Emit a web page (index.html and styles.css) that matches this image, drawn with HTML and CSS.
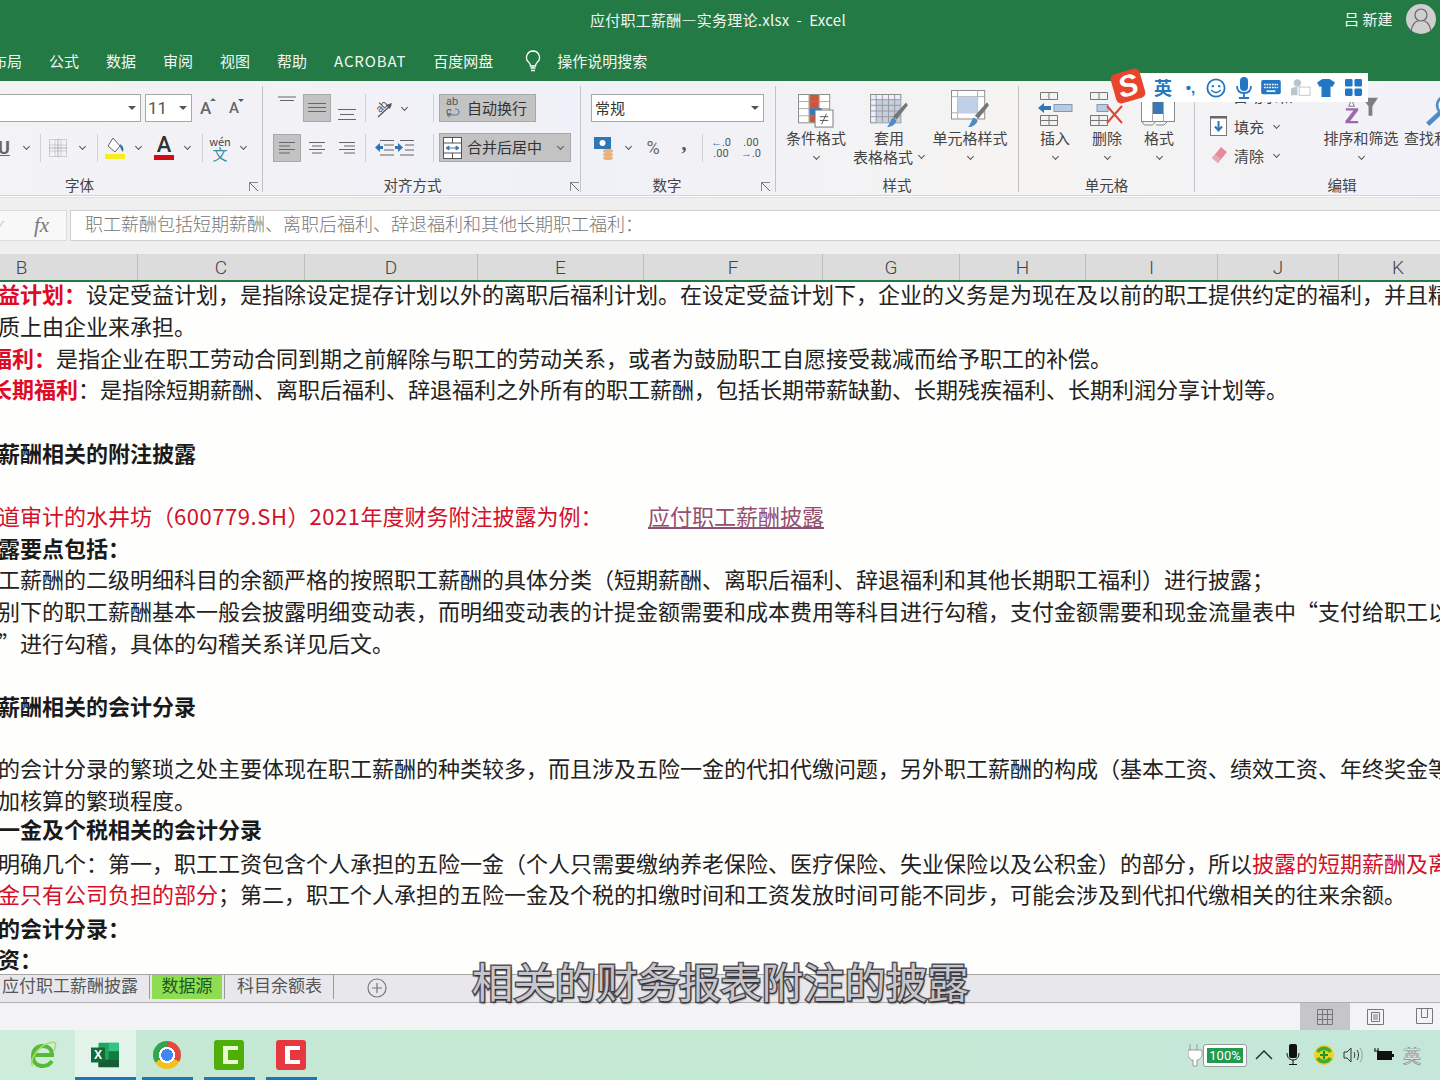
FILE: index.html
```html
<!DOCTYPE html>
<html lang="zh-CN">
<head>
<meta charset="utf-8">
<title>应付职工薪酬—实务理论.xlsx - Excel</title>
<link rel="stylesheet" href="styles.css">
</head>
<body>
<div class="app">
  <header class="titlebar">
    <div class="title">应付职工薪酬—实务理论.xlsx&nbsp; -&nbsp; Excel</div>
    <div class="user">吕 新建</div>
    <svg class="avatar" width="30" height="30" viewBox="0 0 30 30"><circle cx="15" cy="15" r="15" fill="#cfcfcf"/><circle cx="15" cy="11" r="6" fill="none" stroke="#666" stroke-width="1.2"/><path d="M5 27c1-7 5-10 7-10M25 27c-1-7-5-10-7-10" fill="none" stroke="#666" stroke-width="1.2"/></svg>
  </header>
  <nav class="tabs">
    <span>布局</span><span>公式</span><span>数据</span><span>审阅</span><span>视图</span><span>帮助</span><span class="acro">ACROBAT</span><span>百度网盘</span>
    <svg class="bulb" width="16" height="24" viewBox="0 0 16 24"><path d="M8 2a6.500 6.500 0 0 0-4 11.600c1 1 1.500 2 1.500 3.400h5c0-1.400.5-2.400 1.500-3.400A6.500 6.500 0 0 0 8 2z" fill="none" stroke="#fff" stroke-width="1.300"/><path d="M5.500 19h5M6 21.500h4" stroke="#fff" stroke-width="1.500"/></svg>
    <span class="search">操作说明搜索</span>
  </nav>

  <section class="ribbon">
    <div class="group g-font">
      <div class="r1 r-font1">
        <div class="box fontname"><i class="arrow"></i></div>
        <div class="box fontsize"><b>11</b><i class="arrow"></i></div>
        <div class="growa"><span>A</span><i class="tri up"></i></div>
        <div class="growa small"><span>A</span><i class="tri down"></i></div>
      </div>
      <div class="r2 r-font2">
        <span class="u">U</span><i class="chev"></i><i class="vsep"></i>
        <svg width="18" height="18" viewBox="0 0 18 18"><path d="M.5.5h17v17H.5zM6 .5v17M12 .5v17M.5 6h17M.5 12h17" fill="none" stroke="#aaa" stroke-dasharray="1 1"/><path d="M.5 9h17M9 .5v17" stroke="#777" stroke-dasharray="1 1"/></svg>
        <i class="chev"></i><i class="vsep"></i>
        <svg width="20" height="22" viewBox="0 0 20 22"><path d="M8 1l7 8-5 6-7-6z" fill="#fff" stroke="#666"/><path d="M15 7c3 2 4 4 3 8-2-2-3-4-3-8z" fill="#3c6ea8"/><rect y="17" width="20" height="5" fill="#f5ee1e"/></svg>
        <i class="chev"></i>
        <div class="fcolor"><span>A</span><i></i></div>
        <i class="chev"></i><i class="vsep"></i>
        <div class="wen"><span>wén</span><em>文</em></div>
        <i class="chev"></i>
      </div>
      <div class="label l-font">字体</div>
      <i class="launch"></i>
    </div>

    <div class="group g-align">
      <div class="r1 r-align">
        <i></i>
        <div class="alignbtn top"><svg width="18" height="14" viewBox="0 0 18 14"><path d="M0 1h18M2 4.500h14" stroke="#666"/></svg></div><i></i>
        <div class="alignbtn on"><svg width="18" height="14" viewBox="0 0 18 14"><path d="M0 2.500h18M0 6.500h18M0 10.500h18" stroke="#666"/></svg></div><i></i>
        <div class="alignbtn low"><svg width="18" height="14" viewBox="0 0 18 14"><path d="M0 2.500h18M2 7.500h14M0 12.500h18" stroke="#666"/></svg></div>
        <i class="vsep"></i>
        <svg width="20" height="22" viewBox="0 0 20 22"><text x="2" y="13" transform="rotate(-45 8 10)" class="orient">ab</text><path d="M4 20L17 8" stroke="#555" stroke-width="1.300"/><path d="M18 6l-2 6-4-4z" fill="#555"/></svg>
        <i class="chev"></i><i></i><i class="vsep"></i><i></i>
        <div class="flatbtn wrapb">
          <svg width="18" height="22" viewBox="0 0 18 22"><path d="M3 18h9a3 3 0 0 0 0-6H11M3 18l3-2M3 18l3 2" stroke="#5a7aa0" fill="none"/></svg>
          <span class="ab">ab<br>c</span><span>自动换行</span>
        </div>
      </div>
      <div class="r2 r-align">
        <i></i>
        <div class="alignbtn on"><svg width="16" height="14" viewBox="0 0 16 14"><path d="M0 1.500h16M0 5h11M0 8.500h16M0 12h11" stroke="#666"/></svg></div><i></i>
        <div class="alignbtn"><svg width="16" height="14" viewBox="0 0 16 14"><path d="M0 1.500h16M3 5h10M0 8.500h16M3 12h10" stroke="#666"/></svg></div><i></i>
        <div class="alignbtn"><svg width="16" height="14" viewBox="0 0 16 14"><path d="M0 1.500h16M5 5h11M0 8.500h16M5 12h11" stroke="#666"/></svg></div>
        <i class="vsep"></i>
        <svg width="19" height="18" viewBox="0 0 19 18"><path d="M5 1.500h14M9 6h10M9 11h10M5 16h14" stroke="#666"/><path d="M0 8.500L5 4v3h3v3H5v3z" fill="#2d74b8"/></svg>
        <svg width="19" height="18" viewBox="0 0 19 18"><path d="M5 1.500h14M10 6h9M10 11h9M5 16h14" stroke="#666"/><path d="M8 8.500L3 4v3H0v3h3v3z" fill="#2d74b8"/></svg>
        <i></i><i class="vsep"></i><i></i>
        <div class="flatbtn mergeb">
          <svg width="22" height="22" viewBox="0 0 22 22"><rect x=".5" y=".5" width="18" height="21" fill="#fff" stroke="#555"/><path d="M.5 6h18M.5 16h18M9.500.5V6M9.500 16v5.500" stroke="#555"/><path d="M3 11h13M3 11l3-2v4zM16 11l-3-2v4z" stroke="#3d78b5" fill="#3d78b5"/></svg>
          <span>合并后居中</span><i class="chev"></i>
        </div>
      </div>
      <div class="label l-align">对齐方式</div>
      <i class="launch"></i>
    </div>

    <div class="group g-num">
      <div class="r1 r-fmt"><div class="box numfmt"><span>常规</span><i class="arrow"></i></div></div>
      <div class="r2 r-num">
        <svg width="22" height="24" viewBox="0 0 22 24"><rect x="1" y="1" width="17" height="12" fill="#2f76b5"/><circle cx="9.500" cy="7" r="3" fill="#fff"/><ellipse cx="15" cy="15" rx="5" ry="2" fill="#e8b27a"/><ellipse cx="15" cy="18.500" rx="5" ry="2" fill="#e8b27a"/><ellipse cx="15" cy="22" rx="5" ry="2" fill="#e8b27a"/></svg>
        <i class="chev"></i>
        <span class="pct">%</span>
        <span class="comma">,</span>
        <i class="vsep"></i>
        <div class="dec"><span><em>←</em>.0</span><span>.00</span></div>
        <div class="dec"><span>.00</span><span><em>→</em>.0</span></div>
      </div>
      <div class="label l-num">数字</div>
      <i class="launch"></i>
    </div>

    <div class="group g-style">
      <div class="big">
        <svg width="38" height="34" viewBox="0 0 38 36"><rect x=".5" y=".5" width="33" height="30" fill="#fff" stroke="#888"/><path d="M11.500.5v30M22.500.5v30M.5 8h33M.5 15.500h33M.5 23h33" stroke="#aaa"/><rect x="12" y="1" width="10" height="7" fill="#c9573d"/><rect x="12" y="8" width="10" height="7" fill="#c9573d"/><rect x="12" y="15" width="13" height="8" fill="#3d78b5"/><rect x="12" y="23" width="7" height="7" fill="#c9573d"/><rect x="18" y="17" width="19" height="18" fill="#fff" stroke="#777"/><path d="M23 24h9M23 28h9M30 21l-5 11" stroke="#555"/></svg>
        <span>条件格式</span><i class="chev"></i>
      </div>
      <div class="big">
        <svg width="38" height="34" viewBox="0 0 40 36"><rect x=".5" y=".5" width="32" height="30" fill="#eef" stroke="#888"/><rect x="6" y="6" width="26" height="24" fill="#c4cfe0"/><path d="M6.500.5v30M13 .5v30M19.500.5v30M26 .5v30M.5 6h32M.5 12h32M.5 18h32M.5 24h32" stroke="#999"/><path d="M38 9l2 3-12 15-4-3z" fill="#777"/><path d="M24 25l4 3c-1 4-5 7-10 7 3-3 3-7 6-10z" fill="#4d8cc7"/></svg>
        <span>套用</span><span class="line2">表格格式<i class="chev"></i></span>
      </div>
      <div class="big">
        <svg class="up4" width="38" height="38" viewBox="0 0 40 40"><rect x=".5" y=".5" width="35" height="30" fill="#fff" stroke="#888"/><path d="M7 .5v30M28 .5v30M.5 7h35M.5 24h35" stroke="#aaa"/><rect x="7" y="7" width="21" height="17" fill="#c0d0e8"/><path d="M38 13l2 3-11 14-4-3z" fill="#777"/><path d="M24 29l4 3c-1 4-5 7-10 7 3-3 3-7 6-10z" fill="#4d8cc7"/></svg>
        <span>单元格样式</span><i class="chev"></i>
      </div>
      <div class="label">样式</div>
    </div>

    <div class="group g-cells">
      <div class="big">
        <svg class="up3" width="36" height="36" viewBox="0 0 36 36"><path d="M3.500 1.500h17v7h-17zM12 1.500v7M3.500 24.500h17v10h-17zM12 24.500v10M3.500 29.500h17" fill="none" stroke="#777"/><rect x="17" y="13.500" width="18" height="7" fill="#b9cbe0" stroke="#7d9ab8"/><path d="M1 17l6-5v3h7v4H7v3z" fill="#2f76b5"/></svg>
        <span>插入</span><i class="chev"></i>
      </div>
      <div class="big">
        <svg class="up3" width="36" height="36" viewBox="0 0 36 36"><path d="M1.500 1.500h17v7h-17zM10 1.500v7M1.500 24.500h17v10h-17zM10 24.500v10M1.500 29.500h17" fill="none" stroke="#777"/><rect x="8" y="13.500" width="11" height="7" fill="#b9cbe0" stroke="#7d9ab8"/><path d="M18 15l15 17M33 15L18 32" stroke="#d9483a" stroke-width="2"/></svg>
        <span>删除</span><i class="chev"></i>
      </div>
      <div class="big">
        <svg class="up3" width="36" height="36" viewBox="0 0 36 36"><rect x=".5" y="1.500" width="33" height="29" fill="#fff" stroke="#888"/><path d="M11.500 1.500v29M22.500 1.500v29" stroke="#aaa"/><rect x="12" y="8" width="10" height="15" fill="#3d78b5"/><path d="M.5 30l3 4h8l4-4M15 34h8l4-4" fill="none" stroke="#888"/></svg>
        <span>格式</span><i class="chev"></i>
      </div>
      <div class="label">单元格</div>
    </div>

    <div class="group g-edit">
      <div class="edit-cols">
        <div class="edit-list">
          <div class="edit-row sum"><span class="sigma">Σ</span><span>自动求和</span><i class="chev"></i></div>
          <div class="edit-row"><svg width="18" height="20" viewBox="0 0 18 20"><rect x=".5" y=".5" width="16" height="19" fill="#fff" stroke="#777"/><rect x="0" y="0" width="17" height="2.500" fill="#666"/><path d="M8.500 5v9M5 10.500l3.500 4 3.500-4" stroke="#2f76b5" stroke-width="2" fill="none"/></svg><span>填充</span><i class="chev"></i></div>
          <div class="edit-row"><svg width="18" height="18" viewBox="0 0 18 18"><path d="M11 1l6 5-9 11-6-5z" fill="#e58b9d"/><path d="M5 8l6 5-3 4-6-5z" fill="#eba9b6"/></svg><span>清除</span><i class="chev"></i></div>
        </div>
        <div class="big sort">
          <svg width="42" height="34" viewBox="0 0 42 36"><path d="M11 6l-3 7h6z" fill="none" stroke="#777"/><path d="M22 4h17l-6 9v10h-4V13z" fill="#7f7f7f"/><path d="M5 15h13v2.500l-8.500 11h8.500v2.500H4.500v-2.500l8.500-11H5z" fill="#a066b0"/></svg>
          <span>排序和筛选</span><i class="chev"></i>
        </div>
        <div class="big find">
          <svg width="50" height="34" viewBox="0 0 50 36"><circle cx="32" cy="12" r="10" fill="#fff" stroke="#5a8fc0" stroke-width="3"/><path d="M25 20L12 32" stroke="#4d8cc7" stroke-width="5"/></svg>
          <span>查找和选择</span>
        </div>
      </div>
      <div class="label l-edit">编辑</div>
    </div>
  </section>

  <section class="fbar">
    <div class="namecap"><span class="tick">✓</span><em>fx</em></div>
    <div class="finput">职工薪酬包括短期薪酬、离职后福利、辞退福利和其他长期职工福利&#65306;</div>
  </section>

  <section class="cols">
    <span>B</span><span>C</span><span>D</span><span>E</span><span>F</span><span>G</span><span>H</span><span>I</span><span>J</span><span>K</span>
  </section>

  <main class="sheet">
    <p><b class="red">益计划&#65306;</b>设定受益计划&#65292;是指除设定提存计划以外的离职后福利计划。在设定受益计划下&#65292;企业的义务是为现在及以前的职工提供约定的福利&#65292;并且精</p>
    <p>质上由企业来承担。</p>
    <p class="far"><b class="red">福利&#65306;</b>是指企业在职工劳动合同到期之前解除与职工的劳动关系&#65292;或者为鼓励职工自愿接受裁减而给予职工的补偿。</p>
    <p class="far"><b class="red">长期福利</b>&#65306;是指除短期薪酬、离职后福利、辞退福利之外所有的职工薪酬&#65292;包括长期带薪缺勤、长期残疾福利、长期利润分享计划等。</p>
    <p>&nbsp;</p>
    <p><b>薪酬相关的附注披露</b></p>
    <p>&nbsp;</p>
    <p><span class="red lead">道审计的水井坊&#65288;<span class="lat">600779.SH</span>&#65289;<span class="lat">2021</span>年度财务附注披露为例&#65306;</span><a class="link">应付职工薪酬披露</a></p>
    <p><b>露要点包括&#65306;</b></p>
    <p>工薪酬的二级明细科目的余额严格的按照职工薪酬的具体分类&#65288;短期薪酬、离职后福利、辞退福利和其他长期职工福利&#65289;进行披露&#65307;</p>
    <p>别下的职工薪酬基本一般会披露明细变动表&#65292;而明细变动表的计提金额需要和成本费用等科目进行勾稽&#65292;支付金额需要和现金流量表中“支付给职工以</p>
    <p>”进行勾稽&#65292;具体的勾稽关系详见后文。</p>
    <p>&nbsp;</p>
    <p><b>薪酬相关的会计分录</b></p>
    <p>&nbsp;</p>
    <p class="up2">的会计分录的繁琐之处主要体现在职工薪酬的种类较多&#65292;而且涉及五险一金的代扣代缴问题&#65292;另外职工薪酬的构成&#65288;基本工资、绩效工资、年终奖金等</p>
    <p>加核算的繁琐程度。</p>
    <p class="up3"><b>一金及个税相关的会计分录</b></p>
    <p class="down2">明确几个&#65306;第一&#65292;职工工资包含个人承担的五险一金&#65288;个人只需要缴纳养老保险、医疗保险、失业保险以及公积金&#65289;的部分&#65292;所以<span class="red">披露的短期薪酬及离</span></p>
    <p><span class="red">金只有公司负担的部分</span>&#65307;第二&#65292;职工个人承担的五险一金及个税的扣缴时间和工资发放时间可能不同步&#65292;可能会涉及到代扣代缴相关的往来余额。</p>
    <p class="down1"><b>的会计分录&#65306;</b></p>
    <p><b>资&#65306;</b></p>
  </main>

  <section class="sheettabs">
    <span class="st first">应付职工薪酬披露</span><i class="stsep"></i>
    <span class="st active">数据源</span><i class="stsep"></i>
    <span class="st third">科目余额表</span><i class="stsep"></i>
    <svg class="plus" width="20" height="20" viewBox="0 0 20 20"><circle cx="10" cy="10" r="9" fill="none" stroke="#777" stroke-width="1.200"/><path d="M10 5v10M5 10h10" stroke="#777" stroke-width="1.200"/></svg>
  </section>

  <section class="status">
    <div class="view on"><svg width="16" height="16" viewBox="0 0 16 16"><path d="M.5.500h15v15H.500zM5.500.500v15M10.500.500v15M.500 5.500h15M.500 10.500h15" fill="none" stroke="#777"/></svg></div>
    <div class="view"><svg width="17" height="16" viewBox="0 0 17 16"><path d="M.5.500h16v15H.500z" fill="none" stroke="#777"/><path d="M4.500 3.500h8v9h-8zM6 6h5M6 8h5M6 10h5" fill="none" stroke="#777"/></svg></div>
    <div class="view"><svg width="17" height="16" viewBox="0 0 17 16"><path d="M.5.500h16v15H.500zM5.500.500v9h6v-9" fill="none" stroke="#777"/></svg></div>
  </section>

  <footer class="taskbar">
    <div class="tb first"><svg width="28" height="30" viewBox="0 0 28 30"><path d="M5 15h18c0-6-4-9-9-9-6 0-10 4-10 10s4 10 10 10c4 0 7-2 9-5" fill="none" stroke="#58b934" stroke-width="4"/><path d="M4 26C-1 22 9 4 24 2c4 0 3 6 0 10" fill="none" stroke="#a4dc72" stroke-width="1.500"/></svg></div>
    <div class="tb act">
      <svg width="28" height="28" viewBox="0 0 30 30"><rect x="8" y="2" width="22" height="26" rx="1" fill="#21a366"/><rect x="19" y="2" width="11" height="9" fill="#33c481"/><rect x="19" y="11" width="11" height="9" fill="#107c41"/><rect x="8" y="20" width="22" height="8" fill="#185c37"/><rect y="7" width="15" height="16" fill="#0f6b38"/><text x="7.500" y="19.500" text-anchor="middle" class="xl">X</text></svg>
    </div>
    <div class="tb"><i class="chrome"></i></div>
    <div class="tb"><svg width="30" height="30" viewBox="0 0 30 30"><rect width="30" height="30" rx="3" fill="#4fae0a"/><path d="M9 6h15v4h-10v10h10v4H9z" fill="#e8f8d0"/></svg></div>
    <div class="tb"><svg width="30" height="30" viewBox="0 0 30 30"><rect width="30" height="30" rx="3" fill="#e8383f"/><path d="M9 6h15v4h-10v10h10v4H9z" fill="#fff"/></svg></div>
    <div class="tray">
      <svg width="15" height="24" viewBox="0 0 15 24"><path d="M2 1v6M9 1v6M0 7h14v4c0 4-3 6-5 6v6H5v-6c-2 0-5-2-5-6z" fill="#fff" stroke="#999"/></svg>
      <div class="batt"><span>100%</span></div>
      <svg class="caret" width="18" height="10" viewBox="0 0 18 10"><path d="M1 9l8-8 8 8" fill="none" stroke="#222" stroke-width="1.300"/></svg>
      <svg class="mic" width="14" height="22" viewBox="0 0 14 22"><rect x="3" y="0" width="8" height="14" rx="2" fill="#111"/><path d="M1 9c0 5 3 7 6 7s6-2 6-7M7 16v4M3 20.500h8" fill="none" stroke="#111"/></svg>
      <svg class="s360" width="20" height="20" viewBox="0 0 20 20"><circle cx="10" cy="10" r="10" fill="#f0d11e"/><path d="M2 6a9.500 9.500 0 0 1 16 0l-3 2a6 6 0 0 0-10 0zM18 14a9.500 9.500 0 0 1-16 0l3-2a6 6 0 0 0 10 0z" fill="#3eaa3a"/><path d="M10 6v8M6 10h8" stroke="#1a9a2a" stroke-width="2.200"/></svg>
      <svg class="spk" width="20" height="16" viewBox="0 0 20 16"><path d="M1 5h3l4-4v14l-4-4H1z" fill="none" stroke="#333"/><path d="M11 5c1 2 1 4 0 6M14 3c2 3 2 7 0 10" fill="none" stroke="#333"/><path d="M17 1c3 4 3 10 0 14" fill="none" stroke="#999"/></svg>
      <svg class="bat2" width="20" height="14" viewBox="0 0 20 14"><rect x="3" y="3" width="15" height="9" fill="#111"/><rect x="18" y="6" width="2" height="3" fill="#111"/><path d="M1 0v3M4 0v3M0 3h5" stroke="#111"/></svg>
      <span class="ying">英</span>
    </div>
  </footer>

  <div class="subtitle">相关的财务报表附注的披露</div>
  <div class="sogou">
    <div class="s-logo"><span>S</span></div>
    <span class="s-ying">英</span>
    <span class="s-punct">•,</span>
    <svg width="20" height="22" viewBox="0 0 22 22"><circle cx="11" cy="11" r="9.500" fill="none" stroke="#2377c2" stroke-width="2"/><circle cx="7.500" cy="9" r="1.300" fill="#2377c2"/><circle cx="14.500" cy="9" r="1.300" fill="#2377c2"/><path d="M6 13c2 4 8 4 10 0" fill="none" stroke="#2377c2" stroke-width="1.500"/></svg>
    <svg width="16" height="22" viewBox="0 0 16 22"><rect x="4" y="0" width="8" height="14" rx="4" fill="#2377c2"/><path d="M1 9c0 5 3 7 7 7s7-2 7-7M8 16v4M3 21h10" fill="none" stroke="#2377c2" stroke-width="1.800"/></svg>
    <svg width="20" height="16" viewBox="0 0 22 18"><rect width="22" height="16" rx="2" fill="#2377c2"/><path d="M3 5h16M3 8.500h16" stroke="#fff" stroke-width="1.800" stroke-dasharray="2 1"/><path d="M6 12.500h10" stroke="#fff" stroke-width="1.800"/></svg>
    <svg width="20" height="20" viewBox="0 0 22 20"><circle cx="7" cy="4.500" r="4" fill="#b9c4cc"/><path d="M0 18V12c0-2 2-3 7-3v9z" fill="#b9c4cc"/><rect x="9" y="9" width="12" height="9" fill="#fff" stroke="#b9c4cc"/></svg>
    <svg class="s-shirt" width="18" height="18" viewBox="0 0 20 20"><path d="M6 0h8l6 4-3 5-2-1v12H5V8L3 9 0 4z" fill="#2377c2"/></svg>
    <svg width="17" height="17" viewBox="0 0 18 18"><rect width="8" height="8" rx="1.500" fill="#2377c2"/><rect x="10" width="8" height="8" rx="1.500" fill="#2377c2"/><rect y="10" width="8" height="8" rx="1.500" fill="#2377c2"/><rect x="10" y="10" width="8" height="8" rx="1.500" fill="#2377c2"/></svg>
  </div>
</div>
</body>
</html>
```
FILE: styles.css
```css
* { box-sizing: border-box; }
html, body { margin: 0; padding: 0; }
body { font-family: "Noto Sans CJK SC", "Noto Sans", sans-serif; color: #444; overflow: hidden; }
i, em { font-style: normal; }
svg { display: block; flex: none; }
.app { position: relative; width: 1440px; height: 1080px; overflow: hidden; display: flex; flex-direction: column; background: #fff; }

/* title */
.titlebar { height: 40px; flex: none; background: #237a45; color: #f2f7f3; display: flex; align-items: center; font-size: 15px; padding-right: 4px; }
.title { margin-left: 590px; width: 755px; white-space: nowrap; letter-spacing: .25px; margin-top: -1px; }
.user { width: 62px; margin-top: -4px; font-size: 15px; }
.avatar { margin-top: -2px; }
.tabs { height: 41px; flex: none; background: #237a45; color: #f2f7f3; display: flex; align-items: center; gap: 27px; font-size: 15px; margin-left: -8px; white-space: nowrap; }
.tabs .acro { letter-spacing: .85px; }
.tabs .bulb { margin: 0 0 0 5px; }
.tabs .search { margin-left: -11px; }

/* ribbon */
.ribbon { height: 115px; flex: none; background: linear-gradient(90deg, #f3f3f5, #f0f0f8 40%, #f5f4f2 70%, #f1f1f8); display: flex; font-size: 15px; overflow: hidden; padding-top: 5px; border-bottom: 1px solid #d3d3d3; }
.group { position: relative; height: 106px; flex: none; border-right: 1px solid #c4c4c4; padding-top: 8px; }
.g-font { width: 263px; }
.g-align { width: 318px; }
.g-num { width: 195px; }
.g-style { width: 243px; display: grid; grid-template-columns: 80px 66px 96px; grid-template-rows: 85px; }
.g-cells { width: 176px; display: grid; grid-template-columns: 52px 52px 52px; grid-template-rows: 85px; padding-left: 10px; }
.g-edit { width: 260px; border-right: 0; }
.r1, .r2 { display: grid; align-items: center; justify-items: center; }
.r1 { height: 28px; }
.r2 { height: 29px; margin-top: 11px; }
.label { position: absolute; left: 0; right: 0; top: 90px; line-height: 18px; text-align: center; font-size: 14.500px; }
.l-font { right: 103px; }
.l-align { right: 18px; }
.l-num { right: 22px; }
.l-edit { left: 34px; right: 0; }
.launch { position: absolute; right: 4px; top: 96px; width: 9px; height: 9px; border-left: 1px solid #888; border-top: 1px solid #888; background: linear-gradient(45deg, transparent 45%, #666 45%, #666 55%, transparent 55%); }
.g-num .launch { right: 5px; }
.g-align .launch { right: 1px; }
.chev { display: block; width: 5px; height: 5px; border-right: 1px solid #555; border-bottom: 1px solid #555; transform: rotate(45deg); margin-top: -2px; }
.arrow { width: 0; height: 0; border: 4px solid transparent; border-top: 4px solid #555; border-bottom: 0; display: block; flex: none; }
.vsep { display: block; width: 1px; height: 28px; background: #d2d2d4; }
.box { height: 28px; background: #fff; border: 1px solid #a8a8a8; display: flex; align-items: center; justify-content: space-between; }

.r-font1 { grid-template-columns: 151px 47px 30px 30px; margin-left: -10px; justify-items: start; }
.fontname { width: 151px; padding-right: 4px; justify-content: flex-end; border-left: 0; }
.fontsize { width: 47px; margin-left: 4px; padding: 0 4px 0 2px; }
.fontsize b { font-weight: 400; font-family: "Roboto", sans-serif; font-size: 17px; color: #555; }
.growa { position: relative; display: flex; font-size: 17px; color: #666; font-family: "Roboto", sans-serif; font-weight: 500; margin-left: 12px; }
.growa.small { font-size: 15px; margin-left: 11px; }
.tri { width: 0; height: 0; border: 3px solid transparent; display: block; margin: 0 0 0 -1px; }
.tri.up { border-bottom: 3px solid #666; border-top: 0; }
.tri.down { border-top: 3px solid #2f5f96; border-bottom: 0; }
.r-font2 { grid-template-columns: 22px 22px 7px 28px 20px 10px 26px 20px 32px 14px 16px 20px 26px; margin-left: -7px; }
.u { font-family: "Roboto", sans-serif; font-weight: 700; font-size: 18px; color: #666; text-decoration: underline; }
.fcolor { display: flex; flex-direction: column; align-items: center; width: 20px; }
.fcolor span { font-family: "Roboto", sans-serif; font-size: 22px; line-height: 20px; color: #333; font-weight: 500; }
.fcolor i { width: 20px; height: 5px; background: #d20a14; display: block; }
.wen { display: flex; flex-direction: column; align-items: center; line-height: 12px; font-size: 11px; color: #444; }
.wen em { color: #3a8ea0; font-size: 15px; line-height: 14px; }

.r-align { grid-template-columns: 10px 28px 2px 28px 2px 28px 8px 30px 10px 22px 4px 4px 132px; }
.r-align .flatbtn { justify-self: start; }
.orient { font: 11px "Roboto", sans-serif; fill: #555; }
.alignbtn { width: 28px; height: 28px; display: flex; align-items: center; justify-content: center; }
.alignbtn.on { background: #c3c3c3; box-shadow: inset 0 0 0 1px #a8a8a8; }
.alignbtn.low { align-items: flex-end; padding-bottom: 1px; }
.alignbtn.top { align-items: flex-start; padding-top: 2px; }
.flatbtn { height: 29px; background: #c3c3c3; box-shadow: inset 0 0 0 1px #a8a8a8; display: flex; align-items: center; color: #333; position: relative; }
.flatbtn > span, .numfmt span { position: relative; top: -1px; }
.wrapb { width: 97px; padding-left: 28px; height: 28px; }
.wrapb svg { position: absolute; left: 5px; top: 3px; }
.wrapb .ab { position: absolute; left: 7px; top: 3px; font-size: 11px; line-height: 10px; color: #555; font-family: "Roboto", sans-serif; }
.mergeb { width: 132px; padding-left: 4px; }
.mergeb span { margin-left: 2px; }
.mergeb .chev { margin-left: 16px; }

.r-fmt { justify-items: start; }
.numfmt { width: 173px; margin-left: 10px; padding: 0 4px 0 3px; color: #333; }
.r-num { grid-template-columns: 34px 14px 36px 26px 10px 28px 32px; margin-left: 6px; justify-content: start; }
.r-num .dec { display: flex; flex-direction: column; align-items: center; font-size: 11px; line-height: 11px; color: #555; font-family: "Roboto", sans-serif; }
.dec em { color: #2f76b5; }
.pct { font-size: 18px; color: #666; font-family: "Roboto", sans-serif; }
.comma { font-size: 20px; font-weight: 700; color: #555; font-family: "Liberation Serif", serif; margin-top: -8px; }

.big { display: flex; flex-direction: column; align-items: center; line-height: 19px; white-space: nowrap; color: #444; }
.big svg { margin-bottom: 0; }
.big svg.up4 { margin-top: -4px; }
.big svg.up3 { margin-top: -3px; margin-bottom: 1px; }
.big > .chev { margin-top: 7px; }
.line2 { display: flex; align-items: center; gap: 6px; margin-left: -1px; }
.line2 .chev { margin-top: -2px; }

.edit-cols { display: flex; margin-left: 15px; }
.edit-list { width: 113px; flex: none; margin-top: -10px; }
.edit-row { display: flex; align-items: center; height: 29px; gap: 6px; }
.edit-row .chev { margin-left: 4px; }
.edit-row.sum { height: 23px; margin-bottom: 4.500px; }
.sigma { width: 17px; }
.sort { width: 76px; flex: none; }
.find { width: 88px; flex: none; margin-left: 5px; align-items: flex-start; }
.find svg { margin-left: 11px; }

/* formula bar */
.fbar { height: 57px; flex: none; background: #efefef; display: flex; padding-top: 12px; border-top: 1px solid #e0e0e0; margin-top: 1px; }
.namecap { width: 67px; height: 31px; background: #f8f8f8; border: 1px solid #dcdcdc; border-left: 0; display: flex; align-items: center; position: relative; }
.tick { color: #ccc; margin-left: -6px; font-size: 15px; }
.namecap em { position: absolute; left: 34px; top: 0; font-family: "Liberation Serif", serif; font-style: italic; font-size: 21px; line-height: 29px; color: #777; font-weight: 400; }
.finput { flex: 1; margin-left: 3px; height: 31px; background: #fff; border: 1px solid #cfcfcf; border-right: 0; padding-left: 14px; font-size: 18px; line-height: 25px; color: #777; white-space: nowrap; font-weight: 300; }

/* columns */
.cols { height: 28px; flex: none; background: #dcdcdc; display: grid; grid-template-columns: 138px 167px 173px 166px 179px 137px 126px 132px 121px 118px; border-bottom: 2px solid #237a45; font-family: "Roboto", sans-serif; font-size: 19px; font-weight: 300; color: #444; }
.cols span { border-right: 1px solid #bdbdbd; text-align: center; line-height: 28px; height: 26px; }
.cols span:first-child { padding-right: 94px; }
.cols span:last-child { border-right: 0; }

/* sheet */
.sheet { height: 692px; flex: none; background: #fefefc; overflow: hidden; color: #222; font-size: 22px; }
.sheet p { margin: 0 0 0 -2px; height: 31.670px; line-height: 31.670px; white-space: nowrap; }
.sheet p:first-child { height: 23.670px; line-height: 23.670px; margin-bottom: 4.500px; }
.sheet p.far { margin-left: -10px; }
.sheet p.up2 { margin-top: -1.500px; }
.sheet p.up3 { margin-top: -2px; }
.sheet p.down2 { margin-top: 2px; }
.sheet p.down1 { margin-top: 1.500px; }
.sheet b { font-weight: 700; color: #1a1a1a; }
.sheet .red { color: #d1112b; }
.sheet b.red { color: #de0a26; }
.lead { display: inline-block; width: 650px; }
.lat { letter-spacing: .55px; }
.link { color: #954f72; text-decoration: underline; }

/* sheet tabs */
.sheettabs { height: 29px; flex: none; background: #e8e8ec; border-top: 1px solid #a5a5a5; border-bottom: 1px solid #b0b0b0; display: flex; font-size: 17px; line-height: 20px; color: #555; }
.st { white-space: nowrap; }
.st.first { margin-left: 2px; width: 147px; }
.stsep { width: 1px; height: 24px; background: #999; }
.st.active { background: #8fdc50; color: #155a28; width: 70px; margin-left: 2px; margin-right: 2px; text-align: center; height: 24px; }
.st.third { margin-left: 12px; width: 96px; }
.plus { margin: 3px 0 0 33px; }

.status { height: 27px; flex: none; background: #f3f3f5; display: flex; justify-content: flex-end; }
.view { width: 50px; display: flex; align-items: center; justify-content: center; }
.view:last-child { width: 40px; padding-left: 8px; padding-bottom: 1px; }
.view.on { background: #c6c6ca; }

/* taskbar */
.taskbar { height: 50px; flex: none; background: linear-gradient(90deg, #c5e8d4, #c4e9d2 50%, #c5e7da); display: flex; position: relative; }
.tb { width: 62px; height: 50px; display: flex; align-items: center; justify-content: center; border-bottom: 3px solid #1a78b8; padding: 3px 2px 0 0; }
.tb.first { width: 75px; border-bottom-color: transparent; padding-left: 12px; background: #cdecd9; }
.tb.act { width: 61px; background: #e2f4ea; margin-right: 6px; }
.tb + .tb + .tb { width: 51px; margin-right: 11px; }
.chrome { display: block; width: 28px; height: 28px; border-radius: 50%; background: radial-gradient(circle, #4285f4 0 6px, #fff 6px 8px, transparent 8px), conic-gradient(#e14a3c 0 33%, #f3c11e 33% 66%, #31a64f 66%); }
.tray { display: flex; align-items: center; margin-left: auto; height: 50px; width: 252px; }
.batt { width: 44px; height: 23px; background: #fff; border: 1px solid #999; border-radius: 3px; padding: 3px; }
.batt span { display: block; background: #1f9a4f; color: #fff; font-family: "Roboto", sans-serif; font-size: 13px; line-height: 15px; text-align: center; }
.caret { margin-left: 8px; }
.mic { margin-left: 13px; }
.s360 { margin-left: 14px; }
.spk { margin-left: 9px; }
.bat2 { margin-left: 11px; }
.ying { margin-left: 9px; font-size: 18px; color: #fff; -webkit-text-stroke: .7px #888; line-height: 50px; }

/* overlays */
.subtitle { position: absolute; left: 472px; top: 950px; font-size: 41.400px; line-height: 60px; white-space: nowrap; color: #c6c6cc; -webkit-text-stroke: 3px #55555c; paint-order: stroke fill; text-shadow: 1px 2px 2px rgba(0,0,0,.45); }
.sogou { position: absolute; left: 1135px; top: 73px; width: 233px; height: 29px; background: #fff; display: flex; align-items: center; gap: 9.500px; padding-left: 19px; }
.s-logo { position: absolute; left: -22px; top: -2px; width: 30px; height: 30px; background: #e8452c; border-radius: 5px; transform: rotate(-16deg); display: flex; align-items: center; justify-content: center; }
.s-logo span { color: #fff; font: italic 700 30px/30px "Liberation Sans", sans-serif; }
.s-ying { color: #2377c2; font-weight: 700; font-size: 18px; line-height: 29px; width: 18px; position: relative; }
.s-punct { color: #2377c2; font-weight: 700; font-size: 15px; width: 12px; margin-left: 3px; text-align: center; font-family: "Liberation Sans", sans-serif; }
.s-shirt { margin-left: -3px; }
.xl { font: 700 13px "Liberation Sans", sans-serif; fill: #fff; }
```
